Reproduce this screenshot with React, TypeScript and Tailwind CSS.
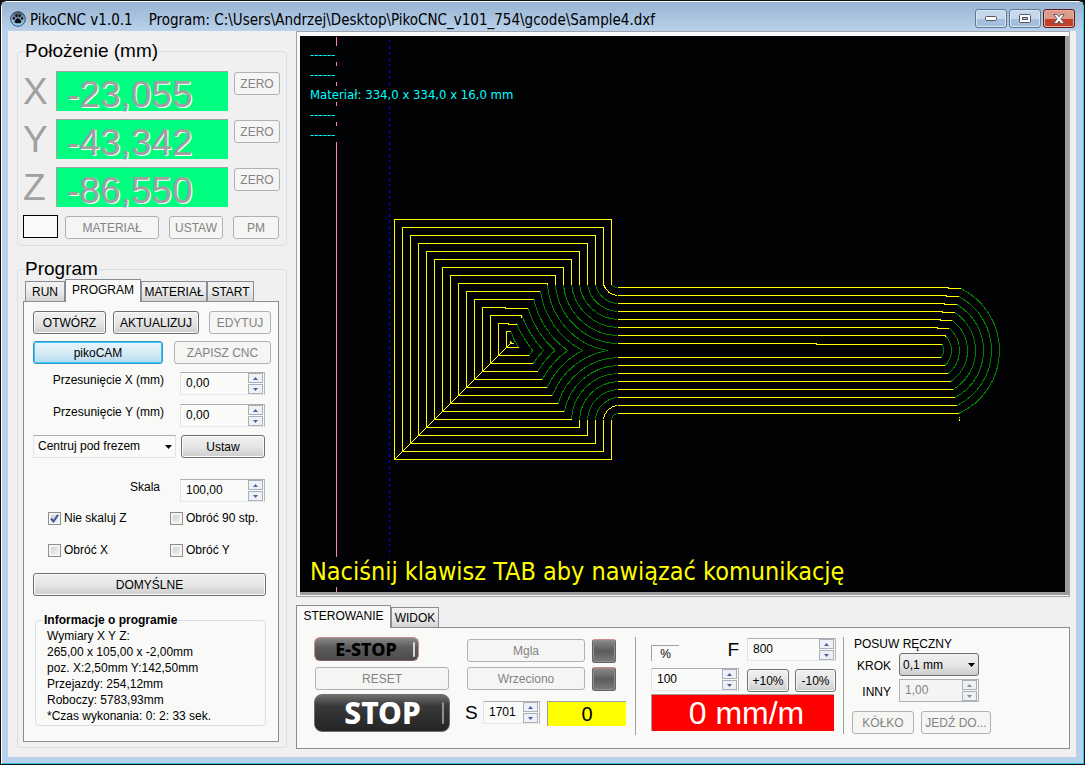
import React, { useState } from "react";
import clsx from "clsx";

const uiFont = "font-['Liberation_Sans',Arial,sans-serif]";
const titleFont = "font-['DejaVu_Sans_Condensed','Noto_Sans',sans-serif]";

function PawIcon() {
  return (
    <svg width="16" height="16" viewBox="0 0 17 17" className="mt-1 shrink-0" aria-hidden="true">
      <defs>
        <linearGradient id="orb" x1="0" y1="0" x2="0" y2="1">
          <stop offset="0" stopColor="#3f4c5c" />
          <stop offset="0.45" stopColor="#8fa9c4" />
          <stop offset="1" stopColor="#8fd6ff" />
        </linearGradient>
      </defs>
      <circle cx="8.5" cy="8.5" r="7.8" fill="url(#orb)" stroke="#34465c" strokeWidth="1" />
      <ellipse cx="4.2" cy="7.6" rx="1.2" ry="1.6" fill="#0b0f14" />
      <ellipse cx="6.9" cy="5" rx="1.3" ry="1.8" fill="#0b0f14" />
      <ellipse cx="10.2" cy="5" rx="1.3" ry="1.8" fill="#0b0f14" />
      <ellipse cx="12.9" cy="7.6" rx="1.2" ry="1.6" fill="#0b0f14" />
      <path d="M8.5 7.6c1.6 0 3.6 2.400 3.600 3.900 0 1.500-1.500 1.600-3.600 1.200-2.100.4-3.600.3-3.600-1.200 0-1.500 2-3.900 3.600-3.900z" fill="#0b0f14" />
    </svg>
  );
}

type BtnProps = {
  children: React.ReactNode;
  className?: string;
  disabled?: boolean;
  focused?: boolean;
};

function Btn({ children, className, disabled, focused }: BtnProps) {
  return (
    <button
      type="button"
      disabled={disabled}
      className={clsx(
        "flex h-[23px] items-center justify-center rounded-[3px] border text-xs whitespace-nowrap",
        disabled && "border-[#adb2b5] bg-[#f5f5f4] text-[#838383]",
        focused &&
          "border-[#3c8fc4] bg-linear-to-b from-[#eaf5fb] via-[#d6ebf6] via-50% to-[#b6dbef] text-black inset-ring inset-ring-[#35cbfa]",
        !disabled &&
          !focused &&
          "border-[#707070] bg-linear-to-b from-[#f0f0f0] via-[#e6e6e6] via-50% to-[#cdcdcd] text-black inset-ring inset-ring-[#fafafa]",
        className,
      )}
    >
      {children}
    </button>
  );
}

function Arrow({ up, muted }: { up?: boolean; muted?: boolean }) {
  return (
    <svg width="5" height="3" viewBox="0 0 5 3" aria-hidden="true">
      <path d={up ? "M0 3L2.500 0L5 3z" : "M0 0L2.500 3L5 0z"} fill={muted ? "#8c8c8c" : "#4a61a8"} />
    </svg>
  );
}

type SpinProps = { id: string; value: string; label?: string; className?: string; disabled?: boolean };

function Spin({ id, value, label, className, disabled }: SpinProps) {
  const [text, setText] = useState(value);
  const step =
    "flex h-[10px] w-[15px] items-center justify-center border border-[#a9b0bb] bg-[#eef0f4]";
  return (
    <div
      className={clsx(
        "flex h-[23px] items-center border border-t-[#abadb3]",
        disabled ? "border-[#adb2b5] bg-[#f4f4f4]" : "border-r-[#b4b6ba] border-b-[#e3e9ef] border-l-[#e2e3ea] bg-[#fafbf9]",
        className,
      )}
    >
      <input
        id={id}
        aria-label={label}
        value={text}
        disabled={disabled}
        onChange={(e) => setText(e.target.value)}
        className={clsx("h-4 w-0 min-w-0 flex-1 bg-transparent pb-px pl-[5px] text-xs outline-none", disabled ? "text-[#838383]" : "text-black")}
      />
      <div className="flex flex-col gap-px pr-px">
        <button type="button" aria-label="+" disabled={disabled} className={step}>
          <Arrow up muted={disabled} />
        </button>
        <button type="button" aria-label="-" disabled={disabled} className={step}>
          <Arrow muted={disabled} />
        </button>
      </div>
    </div>
  );
}

function Tab({ children, active, className }: { children: React.ReactNode; active?: boolean; className: string }) {
  return (
    <button
      type="button"
      role="tab"
      aria-selected={!!active}
      className={clsx(
        "flex items-center justify-center border border-b-0 border-[#898c95] text-xs text-black",
        active ? "z-10 -mb-px h-[23px] bg-[#f9faf8] pb-[2px]" : "h-[20px] bg-linear-to-b from-[#f2f2f2] via-[#ebebeb] via-50% to-[#d5d5d5]",
        className,
      )}
    >
      {children}
    </button>
  );
}

function Check({ label, checked }: { label: string; checked?: boolean }) {
  return (
    <label className="flex h-[14px] items-center gap-[3px] text-xs leading-[14px]">
      <span className="grid size-[13px] place-items-center">
        <input
          type="checkbox"
          defaultChecked={checked}
          className="peer size-[13px] appearance-none border border-[#8e8f8f] bg-linear-to-br from-[#c9cdd2] to-[#f6f6f6] inset-ring-2 inset-ring-[#f4f4f4] [grid-area:1/1]"
        />
        <svg width="9" height="9" viewBox="0 0 9 9" className="pointer-events-none hidden peer-checked:block [grid-area:1/1]" aria-hidden="true">
          <path d="M1 4.500L3.500 7.500L8 0.800" fill="none" stroke="#3c5798" strokeWidth="2" />
        </svg>
      </span>
      {label}
    </label>
  );
}

function Drop({ id, label, options, className, selectClass }: { id: string; label?: string; options: string[]; className: string; selectClass: string }) {
  return (
    <div className={clsx("grid h-[23px] items-center", className)}>
      <select id={id} aria-label={label} className={clsx("h-[23px] w-full appearance-none border text-xs text-black [grid-area:1/1]", selectClass)}>
        {options.map((o) => (
          <option key={o}>{o}</option>
        ))}
      </select>
      <svg width="7" height="4" viewBox="0 0 7 4" className="pointer-events-none mr-1 justify-self-end [grid-area:1/1]" aria-hidden="true">
        <path d="M0 0H7L3.500 4z" fill="#000" />
      </svg>
    </div>
  );
}

const groupBox = "rounded-[4px] border border-[#d5dfe5] min-w-0";

function Axis({ name, value }: { name: string; value: string }) {
  return (
    <div className="flex h-10">
      <span className="w-[33px] text-[37px] leading-[42px] text-[#a0a0a0]">{name}</span>
      <output className="flex-1 border-t border-l border-[#a0a0a0] bg-[#00ff80] pl-[10px] text-[37px] leading-[45px] text-[#a0a0a0] [text-shadow:1px_1px_0_#fff]">
        {value}
      </output>
      <Btn disabled className="mt-px ml-[6px] w-[46px]">ZERO</Btn>
    </div>
  );
}

function PositionPanel() {
  return (
    <fieldset className={clsx(groupBox, "pr-[6px] pb-[6px] pl-[5px]")}>
      <legend className="ml-[2px] h-5 text-[19px] leading-5">Położenie (mm)</legend>
      <div className="flex flex-col gap-2 pt-[10px]">
        <Axis name="X" value="-23,055" />
        <Axis name="Y" value="-43,342" />
        <Axis name="Z" value="-86,550" />
        <div className="flex items-end pr-px">
          <span className="mb-px h-[23px] w-[35px] border border-black bg-[#f9faf8]" />
          <Btn disabled className="ml-[7px] w-[94px]">MATERIAŁ</Btn>
          <Btn disabled className="ml-[10px] w-[54px]">USTAW</Btn>
          <Btn disabled className="ml-auto w-[46px]">PM</Btn>
        </div>
      </div>
    </fieldset>
  );
}

function ProgramPanel() {
  const info = [
    "Wymiary X Y Z:",
    "265,00 x 105,00 x -2,00mm",
    "poz. X:2,50mm Y:142,50mm",
    "Przejazdy: 254,12mm",
    "Roboczy: 5783,93mm",
    "*Czas wykonania: 0: 2: 33 sek.",
  ];
  return (
    <fieldset className={clsx(groupBox, "pr-[6px] pb-[5px] pl-[5px]")}>
      <legend className="ml-[2px] h-5 text-[19px] leading-5">Program</legend>
      <div role="tablist" className="flex h-[22px] items-end pl-[2px]">
        <Tab className="w-[40px]">RUN</Tab>
        <Tab active className="w-[76px]">PROGRAM</Tab>
        <Tab className="w-[66px]">MATERIAŁ</Tab>
        <Tab className="w-[47px]">START</Tab>
      </div>
      <div className="mr-px border border-[#898c95] bg-[#f9faf8] pt-[9px] pr-[7px] pb-[15px] pl-[9px]">
        <div className="flex">
          <Btn className="w-[73px]">OTWÓRZ</Btn>
          <Btn className="ml-[7px] w-[86px]">AKTUALIZUJ</Btn>
          <Btn disabled className="ml-auto w-[62px]">EDYTUJ</Btn>
        </div>
        <div className="mt-[7px] flex justify-between">
          <Btn focused className="w-[130px]">pikoCAM</Btn>
          <Btn disabled className="w-[97px]">ZAPISZ CNC</Btn>
        </div>
        <div className="mt-2 flex justify-end pr-[6px] text-xs">
          <label htmlFor="offset-x" className="pr-4 leading-4">Przesunięcie X (mm)</label>
          <Spin id="offset-x" value="0,00" className="w-[85px]" />
        </div>
        <div className="mt-[9px] flex justify-end pr-[6px] text-xs">
          <label htmlFor="offset-y" className="pr-4 leading-4">Przesunięcie Y (mm)</label>
          <Spin id="offset-y" value="0,00" className="w-[85px]" />
        </div>
        <div className="mt-2 flex justify-between pr-[6px]">
          <Drop
            id="center-mode"
            label="Centruj"
            options={["Centruj pod frezem"]}
            className="w-[143px]"
            selectClass="border-[#e2e3ea] border-t-[#abadb3] bg-[#fafbf9] pb-[2px] pl-1"
          />
          <Btn className="w-[84px]">Ustaw</Btn>
        </div>
        <div className="mt-[21px] flex justify-end pr-[6px] text-xs">
          <label htmlFor="scale" className="pr-5 leading-4">Skala</label>
          <Spin id="scale" value="100,00" className="w-[85px]" />
        </div>
        <div className="mt-[9px] grid grid-cols-[122px_1fr] gap-y-[18px] pl-[15px]">
          <Check label="Nie skaluj Z" checked />
          <Check label="Obróć 90 stp." />
          <Check label="Obróć X" />
          <Check label="Obróć Y" />
        </div>
        <div className="mt-4 pr-[5px]">
          <Btn className="w-full">DOMYŚLNE</Btn>
        </div>
        <fieldset className={clsx(groupBox, "mt-4 mr-[5px] ml-[2px] pb-px pl-[11px] text-xs leading-4")}>
          <legend className="-ml-1 h-4 px-px leading-4 font-bold">Informacje o programie</legend>
          {info.map((line) => (
            <p key={line}>{line}</p>
          ))}
        </fieldset>
      </div>
    </fieldset>
  );
}

const STEP = 8;
const TOP = { x: 619, y: 279 };
const BOT = { x: 619, y: 421 };
const MID = 350;
const CAP = { x: 930, y: 350 };

function half(r: number, d: number) {
  return Math.sqrt(Math.max(r * r - d * d, 0));
}

function buildPaths() {
  const yellow: string[] = [];
  const green: string[] = [];
  for (let i = 0; i < 14; i++) {
    const r = STEP * (i + 1);
    const left = 394 + STEP * i;
    const top = 219 + STEP * i;
    const bottom = 459 - STEP * i;
    const straight = i < 9;
    const topX = straight ? 611 - STEP * i : TOP.x - half(r, top - TOP.y);
    const botX = i < 6 ? 611 - STEP * i : BOT.x - half(r, BOT.y - bottom);
    const jog = i === 11 ? 505 : i === 13 ? 508 : 0;
    const head = jog ? `H${jog}V${top + 1}H${topX}` : `H${topX}`;
    const tail = straight ? `V284` : i === 12 ? "V317" : "";
    yellow.push(`M${left} ${bottom}V${top}${head}${tail}`);
    yellow.push(`M${left} ${bottom}H${botX}${i < 6 ? "V419" : ""}`);
    const arcs = i === 1 ? yellow : green;
    const topY = straight ? 284 : top;
    const botY = i < 6 ? 419 : bottom;
    if (i < 8) {
      arcs.push(`M${topX} ${topY}A${r} ${r} 0 0 0 617 ${TOP.y + r}`);
      arcs.push(`M${botX} ${botY}A${r} ${r} 0 0 1 617 ${BOT.y - r}`);
    } else {
      const tip = TOP.x - half(r, MID - TOP.y);
      green.push(`M${topX} ${topY}A${r} ${r} 0 0 0 ${tip} ${MID}`);
      green.push(`M${botX} ${botY}A${r} ${r} 0 0 1 ${tip} ${MID}`);
    }
  }
  yellow.push("M506 347V331H510", "M506 347H518");
  green.push("M511 332L513 338L515 342L518 347");
  const jogs = [948, 946, 944, 942, 940, 937, 945, 816];
  for (let i = 0; i < 8; i++) {
    const r = 69 - STEP * i;
    const y = 287 + STEP * i;
    const yb = 413 - STEP * i;
    const endTop = CAP.x + half(r, CAP.y - y - 1);
    const endBot = CAP.x + half(r, yb - CAP.y);
    yellow.push(`M617 ${y}H${jogs[i]}V${y + 1}H${endTop}`);
    yellow.push(`M617 ${yb}H${endBot}`);
    green.push(`M${endTop} ${y + 1}A${r} ${r} 0 0 1 ${endBot} ${yb}`);
  }
  yellow.push("M394 459L510 343V340", "M958 417H959M959 418V420M958 420H959", "M511 341V343H513");
  return { yellow: yellow.join(""), green: green.join("") };
}

const paths = buildPaths();

function Toolpath() {
  return (
    <svg className="h-full w-full [grid-area:1/1]" shapeRendering="crispEdges" role="img" aria-label="Sample4.dxf">
      <g transform="translate(-299.500,-35.500)" fill="none" strokeWidth="1">
        <path d="M336 36V1200" stroke="#ff80c0" />
        <path d="M389 39V1200" stroke="#0000e0" strokeDasharray="3 3" />
        <path d={paths.green} stroke="#008000" />
        <path d={paths.yellow} stroke="#ffff00" />
      </g>
    </svg>
  );
}

function Viewport() {
  const lines = ["------", "------", "Materiał: 334,0 x 334,0 x 16,0 mm", "------", "------"];
  return (
    <div className="flex flex-1 border border-[#a0a3a8] bg-[#f9faf8] pt-1 pb-px pl-[3px]">
      <div className="grid flex-1 grid-cols-1 grid-rows-1 border-r-4 border-b-[3px] border-[#9c9c9c] bg-[#020103]">
        <Toolpath />
        <div className={clsx("z-10 flex flex-col items-start gap-1 pt-[10px] pb-[5px] pl-[10px] [grid-area:1/1]", titleFont)}>
          {lines.map((line, i) => (
            <p key={i} className="h-4 bg-[#020103] pr-1 text-[13px] leading-[17px] text-[#00ffff]">{line}</p>
          ))}
          <p className="mt-auto bg-[#020103] text-[25px] leading-[30px] text-[#ffff00]">
            Naciśnij klawisz TAB aby nawiązać komunikację
          </p>
        </div>
      </div>
    </div>
  );
}

function Lamp() {
  return (
    <button
      type="button"
      aria-label="Lampa"
      className="size-6 rounded-[3px] border border-[#6b5f5f] border-t-[#c98a8a] bg-linear-to-b from-[#8c8c8c] via-[#5c5c5c] to-[#7d7d7d] inset-ring inset-ring-[#8e8e8e]"
    />
  );
}

function ControlPanel() {
  return (
    <div className="pb-2">
      <div role="tablist" className="flex h-[22px] items-end">
        <Tab active className="w-[95px]">STEROWANIE</Tab>
        <Tab className="w-[48px]">WIDOK</Tab>
      </div>
      <div className="flex h-[122px] border border-[#898c95] bg-[#f9faf8] pt-[9px] pl-[17px] text-xs">
        <div className="flex w-[136px] flex-col items-start font-['Noto_Sans',sans-serif]">
          <button
            type="button"
            className="flex h-6 w-[105px] items-center justify-center rounded-md border border-[#c98a8a] border-b-[#7d6464] bg-linear-to-b from-[#8a8a8a] via-[#5e5e5e] via-40% to-[#4b4b4b] text-[18px] leading-none font-extrabold text-black"
          >
            <span className="flex-1 pl-1">E-STOP</span>
            <span className="mr-[3px] h-[15px] w-[2px] rounded-full bg-[#d8d8d8]" />
          </button>
          <span className={clsx("mt-[6px] px-px", uiFont)}>
            <Btn disabled className="w-[134px]">RESET</Btn>
          </span>
          <button
            type="button"
            className="mt-1 flex h-[38px] w-[136px] items-center rounded-lg border border-[#6d6f6d] bg-linear-to-b from-[#6d706d] via-[#3a3a3a] via-30% to-[#242424] text-[30px] leading-none font-extrabold text-white"
          >
            <span className="flex-1 pl-2">STOP</span>
            <span className="mr-[5px] h-[22px] w-[2px] rounded-full bg-[#8e8e8e]" />
          </button>
        </div>

        <div className="ml-[17px] flex w-[160px] flex-col pt-[2px]">
          <div className="flex gap-[7px]">
            <Btn disabled className="w-[118px]">Mgla</Btn>
            <Lamp />
          </div>
          <div className="mt-1 flex gap-[7px]">
            <Btn disabled className="w-[118px]">Wrzeciono</Btn>
            <Lamp />
          </div>
          <div className="mt-[10px] -ml-[2px] flex pr-px">
            <label htmlFor="spindle" className="w-4 text-[19px] leading-[23px]">S</label>
            <Spin id="spindle" value="1701" className="ml-[2px] w-[57px]" />
            <output className="ml-[7px] flex-1 border-t border-l border-[#a0a0a0] bg-[#ffff00] text-center text-[20px] leading-[24px]">0</output>
          </div>
        </div>

        <div className="ml-2 h-[98px] w-px bg-[#a0a0a0]" />

        <div className="ml-[15px] flex w-[185px] flex-col pt-px">
          <div className="flex">
            <span className="mt-[7px] h-4 w-7 border-t border-l border-[#a0a0a0] text-center leading-4">%</span>
            <label htmlFor="feed" className="ml-auto pr-[8px] text-[19px] leading-[23px]">F</label>
            <Spin id="feed" value="800" className="w-[89px]" />
          </div>
          <div className="mt-[7px] flex">
            <Spin id="percent" label="%" value="100" className="w-[88px]" />
            <Btn className="mt-px ml-2 w-[42px]">+10%</Btn>
            <Btn className="mt-px ml-[6px] w-[41px]">-10%</Btn>
          </div>
          <output className="mt-[2px] mr-[2px] h-[37px] border-t border-l border-[#a0a0a0] bg-[#ff0000] pl-[7px] text-center text-[32px] leading-[36px] text-white">
            0 mm/m
          </output>
        </div>

        <div className="ml-[7px] h-[97px] w-px bg-[#a0a0a0]" />

        <div className="ml-2 flex w-[140px] flex-col">
          <span className="pl-[2px] leading-[14px]">POSUW RĘCZNY</span>
          <div className="mt-[2px] flex">
            <label htmlFor="step" className="w-[47px] pr-2 text-right leading-[26px]">KROK</label>
            <Drop
              id="step"
              options={["0,1 mm"]}
              className="w-[80px]"
              selectClass="rounded-[3px] border-[#707070] bg-linear-to-b from-[#f0f0f0] via-[#e6e6e6] via-50% to-[#cdcdcd] pl-[3px]"
            />
          </div>
          <div className="flex h-[23px]">
            <label htmlFor="other" className="w-[47px] pr-2 text-right leading-[26px]">INNY</label>
            <Spin id="other" value="1,00" disabled className="w-[80px]" />
          </div>
          <div className="mt-[9px] flex gap-[7px]">
            <Btn disabled className="w-[62px]">KÓŁKO</Btn>
            <Btn disabled className="w-[70px]">JEDŹ DO...</Btn>
          </div>
        </div>
      </div>
    </div>
  );
}

function TitleBar() {
  const glass = "flex h-[19px] w-8 items-center justify-center rounded-[3px] border inset-ring";
  return (
    <header className="flex h-[29px] items-center bg-linear-to-b from-[#98b4d3] to-[#b9d1ea] pr-2 pl-2">
      <PawIcon />
      <h1 className={clsx("flex flex-1 gap-4 pt-[6px] pl-1 text-[15px] leading-5 whitespace-nowrap text-black", titleFont)}>
        <span>PikoCNC v1.0.1</span>
        <span>Program: C:\Users\Andrzej\Desktop\PikoCNC_v101_754\gcode\Sample4.dxf</span>
      </h1>
      <div className="flex gap-[2px] pt-1">
        <button type="button" aria-label="Minimalizuj" className={clsx(glass, "border-[#5f7896] bg-linear-to-b from-[#c5d8ec] from-50% to-[#a3bfdd] to-50% inset-ring-[#d8e6f4]")}>
          <svg width="12" height="5" viewBox="0 0 12 5" aria-hidden="true">
            <rect x="0.500" y="0.500" width="11" height="4" rx="1" fill="#fff" stroke="#54575f" />
          </svg>
        </button>
        <button type="button" aria-label="Maksymalizuj" className={clsx(glass, "border-[#5f7896] bg-linear-to-b from-[#c5d8ec] from-50% to-[#a3bfdd] to-50% inset-ring-[#d8e6f4]")}>
          <svg width="12" height="9" viewBox="0 0 12 9" aria-hidden="true">
            <rect x="0.500" y="0.500" width="11" height="8" rx="1" fill="#fff" stroke="#54575f" />
            <rect x="3.500" y="3.500" width="5" height="2" fill="#a9c3e0" stroke="#54575f" />
          </svg>
        </button>
        <button type="button" aria-label="Zamknij" className={clsx(glass, "border-[#5c1a1a] bg-linear-to-b from-[#dd9a8c] from-50% to-[#c0402c] to-50% inset-ring-[#e5aea4]")}>
          <svg width="12" height="10" viewBox="0 0 12 10" aria-hidden="true">
            <path d="M0.800 0.500H4L6 2.800L8 0.500H11.200L7.900 4.900L11.400 9.500H8.100L6 7.100L3.900 9.500H0.600L4.100 4.900z" fill="#fff" stroke="#54575f" strokeWidth="0.900" />
          </svg>
        </button>
      </div>
    </header>
  );
}

export default function App() {
  return (
    <div className={clsx("flex min-h-screen flex-col bg-[#111] p-px text-black", uiFont)}>
      <div className="flex flex-1 flex-col rounded-t-md border border-t-white border-r-[#2fc6e8] border-b-[#2fc6e8] border-l-white bg-[#b9d1ea]">
        <TitleBar />
        <div className="mr-[7px] mb-[6px] ml-[6px] flex flex-1 bg-[#f0f0f0]">
          <aside className="flex w-[288px] shrink-0 flex-col gap-[13px] pt-[10px] pr-[9px] pl-[9px]">
            <PositionPanel />
            <ProgramPanel />
          </aside>
          <main className="mr-[6px] flex min-w-0 flex-1 flex-col gap-2">
            <Viewport />
            <ControlPanel />
          </main>
        </div>
      </div>
    </div>
  );
}
